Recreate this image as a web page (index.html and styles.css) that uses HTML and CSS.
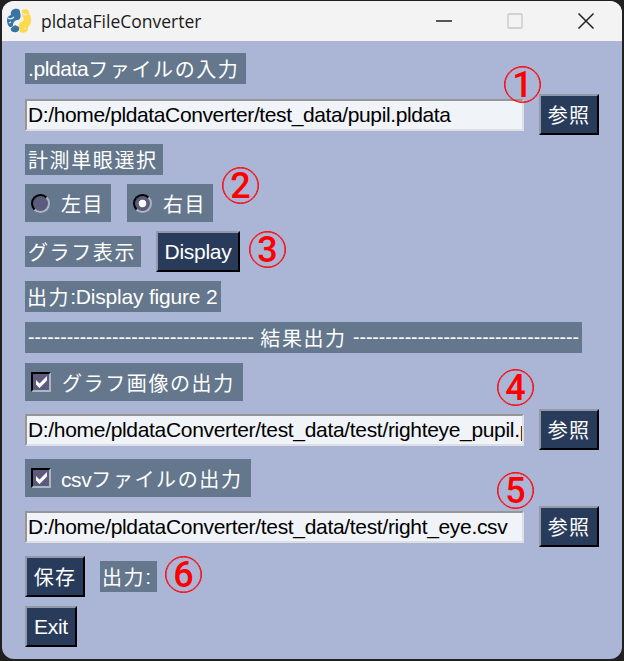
FILE: index.html
```html
<!DOCTYPE html>
<html lang="ja">
<head>
<meta charset="utf-8">
<title>pldataFileConverter</title>
<link rel="stylesheet" href="styles.css">
</head>
<body>
<main class="window">
  <header class="titlebar">
    <svg class="logo" viewBox="0 0 26 26">
      <path d="M12 1C7 0 4 3 5 7C1 8 0 12 2 17C3 19 5 20 7 18C7 14 9 12 12 12C15 11 15 8 14 4C14 2 13 1 12 1Z" fill="#3674a5"/>
      <path d="M5 20C4 22 6 24 8 24C12 25 14 22 13 19L9 17Z" fill="#3674a5"/>
      <path d="M16 2C20 0 24 2 23 6C26 9 26 16 22 19C23 23 19 26 14 24C13 20 12 16 15 14C19 13 18 10 16 8Z" fill="#ffd94b"/>
      <path d="M2 10Q5 12 8 9M3 15L5 14M17 5Q18 8 21 6M18 21L20 20" fill="none" stroke="#e9f1f3" stroke-width="1.2"/>
    </svg>
    <h1 class="title">pldataFileConverter</h1>
    <div class="controls">
      <svg viewBox="0 0 18 18"><path d="M1 9H17" stroke="#222" stroke-width="1.6"/></svg>
      <svg viewBox="0 0 18 18"><rect x="2" y="2" width="14" height="14" rx="1" fill="none" stroke="#c6c6c6" stroke-width="1.3"/></svg>
      <svg viewBox="0 0 18 18"><path d="M1.5 1.5L16.5 16.5M16.5 1.5L1.5 16.5" stroke="#222" stroke-width="1.5"/></svg>
    </div>
  </header>
  <section class="form">
    <div class="row row-label"><span class="label w-source"><span class="latin">.pldata</span>ファイルの入力</span></div>
    <div class="row"><div class="field source"><span>D:/home/pldataConverter/test_data/pupil.pldata</span></div><button class="btn browse">参照</button></div>
    <div class="row row-label"><span class="label w-eye">計測単眼選択</span></div>
    <div class="row row-option">
      <label class="option w-radio"><i class="radio"></i><span>左目</span></label>
      <label class="option w-radio"><i class="radio selected"></i><span>右目</span></label>
    </div>
    <div class="row"><span class="label w-graph">グラフ表示</span><button class="btn display latin">Display</button></div>
    <div class="row row-label"><span class="label w-status">出力<span class="latin">:Display figure 2</span></span></div>
    <div class="row row-label"><span class="label w-divider"><span class="dashes">-----------------------------------</span><span>結果出力</span><span class="dashes">-----------------------------------</span></span></div>
    <div class="row row-option"><label class="option w-image"><i class="check"><svg viewBox="0 0 16 16"><path d="M3 6L6.5 9.5L14 2V6.5L6.5 14L3 10.5Z"/></svg></i><span>グラフ画像の出力</span></label></div>
    <div class="row"><div class="field"><span>D:/home/pldataConverter/test_data/test/righteye_pupil.p</span></div><button class="btn browse">参照</button></div>
    <div class="row row-option"><label class="option w-csv"><i class="check"><svg viewBox="0 0 16 16"><path d="M3 6L6.5 9.5L14 2V6.5L6.5 14L3 10.5Z"/></svg></i><span><span class="latin">csv</span>ファイルの出力</span></label></div>
    <div class="row"><div class="field"><span>D:/home/pldataConverter/test_data/test/right_eye.csv</span></div><button class="btn browse">参照</button></div>
    <div class="row"><button class="btn save">保存</button><span class="label w-output">出力<span class="latin">:</span></span></div>
    <div class="row"><button class="btn exit latin">Exit</button></div>
  </section>
</main>
<span class="mark m1">1</span>
<span class="mark m2">2</span>
<span class="mark m3">3</span>
<span class="mark m4">4</span>
<span class="mark m5">5</span>
<span class="mark m6">6</span>
</body>
</html>
```
FILE: styles.css
```css
* { box-sizing: border-box; }
body {
  margin: 0;
  width: 624px;
  height: 661px;
  padding: 1px 2px 2px;
  overflow: hidden;
  position: relative;
  background: #202020;
  font-family: "Liberation Sans", "Noto Sans CJK JP", sans-serif;
}
.window {
  width: 620px;
  height: 658px;
  border-radius: 12px;
  overflow: hidden;
  background: #abb5d5;
}
.titlebar {
  height: 40px;
  display: flex;
  align-items: center;
  background: #f3f3f3;
  padding-left: 4px;
}
.logo { width: 26px; height: 26px; }
.title {
  margin: 0 0 0 9px;
  font: 400 17.5px "Open Sans", sans-serif;
  color: #1b1b1b;
}
.controls { margin-left: auto; display: flex; gap: 53px; padding-right: 27px; }
.controls svg { width: 18px; height: 18px; }
.form {
  padding: 12px 0 0 23px;
  display: grid;
  grid-template-rows: 41px 50px 40px 47px 50px 41px 41px 46px 50px 47px 50px 50px 41px;
}
.row { height: 41px; display: flex; align-items: center; gap: 15px; }
.row-label { height: 31px; }
.row-option { height: 38px; gap: 16px; }
.label, .option {
  background: #64778d;
  color: #fff;
  font-size: 20px;
  letter-spacing: 1.6px;
  white-space: nowrap;
  display: flex;
  align-items: center;
}
.label { height: 31px; padding: 0 0 0 3px; }
.option { height: 38px; }
.latin { font-size: 21px; letter-spacing: -0.4px; }
.w-source { width: 221px; }
.w-eye { width: 138px; }
.w-graph { width: 116px; }
.w-status { width: 196px; padding-left: 2px; }
.w-status .latin { letter-spacing: -0.2px; }
.w-divider { width: 557px; justify-content: space-between; padding-right: 3px; }
.w-output { width: 57px; padding-left: 2px; }
.w-radio { width: 86px; padding-left: 6px; gap: 11px; }
.w-image { width: 218px; padding-left: 6px; gap: 11px; }
.w-csv { width: 226px; padding-left: 6px; gap: 10px; }
.dashes { font-size: 19.4px; letter-spacing: 0; }
.field {
  width: 499px;
  height: 32px;
  border: 2px solid #dedfe2;
  border-top-color: #969696;
  border-left-color: #969696;
  background: #f0f3f7;
  overflow: hidden;
  white-space: nowrap;
  display: flex;
  align-items: center;
  padding: 1px 0 0 1px;
  font-size: 21px;
  letter-spacing: -0.32px;
  color: #000;
}
.source { letter-spacing: -0.38px; }
.btn {
  height: 41px;
  padding: 0;
  border: 2px solid #000;
  border-top-color: #9299ab;
  border-left-color: #9299ab;
  background: #283b5b;
  color: #fff;
  font-family: inherit;
  font-size: 20px;
  letter-spacing: 1.2px;
}
.btn.latin { font-size: 21px; letter-spacing: -0.3px; }
.browse, .save { width: 60px; }
.display { width: 84px; }
.exit { width: 52px; }
.radio {
  width: 19px;
  height: 19px;
  border-radius: 50%;
  border: 2px solid;
  border-color: #000 #adb5be #adb5be #000;
  background: #5c5a7d;
}
.selected { background: radial-gradient(circle, #fff 0 3.5px, #5c5a7d 4.2px); }
.check {
  width: 20px;
  height: 20px;
  border: 2px solid;
  border-color: #000 #adb5be #adb5be #000;
  background: #5c5a7d;
  display: flex;
  align-items: center;
  justify-content: center;
}
.check svg { width: 16px; height: 16px; fill: #fff; }
/* Numbered callouts floating over the window */
.mark {
  position: absolute;
  width: 37px;
  height: 37px;
  border: 1px solid #f00;
  box-shadow: inset 0 0 0 0.5px #f00;
  border-radius: 50%;
  color: #f00;
  font: 500 36px/36px Roboto, sans-serif;
  text-align: center;
}
.m1 { left: 504px; top: 66px; }
.m2 { left: 222px; top: 167px; }
.m3 { left: 249px; top: 231px; }
.m4 { left: 497px; top: 369px; }
.m5 { left: 497px; top: 472px; }
.m6 { left: 165px; top: 556px; }
```
